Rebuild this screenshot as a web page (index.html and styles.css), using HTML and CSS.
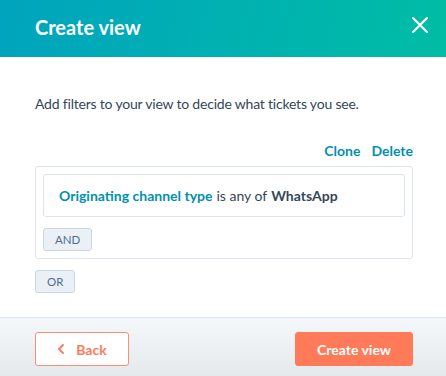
FILE: index.html
```html
<!DOCTYPE html>
<html lang="en">
<head>
    <meta charset="UTF-8">
    <meta name="viewport" content="width=device-width, initial-scale=1.0">
    <title>Create view</title>
    <link rel="stylesheet" href="styles.css">
</head>
<body>
    <div class="modal">
        <div class="modal-header">
            <h1>Create view</h1>
            <button class="close-btn" aria-label="Close">
                <svg width="16" height="16" viewBox="0 0 16 16">
                    <path d="M1 1 L15 15 M15 1 L1 15" stroke="#fff" stroke-width="2.2" stroke-linecap="round"/>
                </svg>
            </button>
        </div>

        <div class="modal-body">
            <p class="intro">Add filters to your view to decide what tickets you see.</p>

            <div class="group-actions">
                <a href="#">Clone</a>
                <a href="#">Delete</a>
            </div>

            <div class="filter-group">
                <div class="filter-card">
                    <span class="prop">Originating channel type</span> is any of <strong>WhatsApp</strong>
                </div>
                <button class="logic-btn">AND</button>
            </div>

            <button class="logic-btn">OR</button>
        </div>

        <div class="modal-footer">
            <button class="btn-secondary">
                <svg width="8" height="10" viewBox="0 0 8 10">
                    <path d="M6 1 L2 5 L6 9" fill="none" stroke="#ff7a59" stroke-width="1.8" stroke-linecap="round" stroke-linejoin="round"/>
                </svg>
                Back
            </button>
            <button class="btn-primary">Create view</button>
        </div>
    </div>
</body>
</html>
```

FILE: styles.css
```css
body {
    margin: 0;
    font-family: Lato, Arial, sans-serif;
    color: #33475b;
    background: #fff;
}
.modal {
    width: 446px;
    height: 376px;
    display: flex;
    flex-direction: column;
}
.modal-header {
    height: 57px;
    background: linear-gradient(100deg, #00a4bd 0%, #00bda5 100%);
    display: flex;
    align-items: center;
    justify-content: space-between;
    padding: 0 18px 0 35px;
}
.modal-header h1 {
    margin: -3px 0 0 0;
    color: #fff;
    font-size: 20px;
    font-weight: 700;
}
.close-btn {
    background: none;
    border: none;
    padding: 0;
    width: 16px;
    height: 16px;
    margin-top: -7px;
    cursor: pointer;
}
.modal-body {
    flex: 1;
    padding: 36px 33px 0 35px;
}
.intro {
    margin: 0 0 26px 0;
    font-size: 14px;
    letter-spacing: -0.2px;
    line-height: 22px;
}
.group-actions {
    display: flex;
    justify-content: flex-end;
    gap: 11px;
    margin-bottom: 5px;
}
.group-actions a {
    color: #0091ae;
    font-weight: 700;
    font-size: 14px;
    text-decoration: none;
    line-height: 20px;
}
.filter-group {
    border: 1px solid #dfe3eb;
    border-radius: 3px;
    padding: 7px 7px 7px 7px;
    margin-bottom: 11px;
}
.filter-card {
    border: 1px solid #dfe3eb;
    border-radius: 3px;
    padding: 0 15px;
    height: 41px;
    display: flex;
    align-items: center;
    gap: 4px;
    font-size: 14px;
    margin-bottom: 11px;
}
.filter-card .prop {
    color: #0091ae;
    font-weight: 700;
}
.filter-card strong {
    color: #33475b;
}
.logic-btn {
    display: block;
    background: #eaf0f6;
    border: 1px solid #cbd6e2;
    border-radius: 3px;
    color: #506e91;
    font-family: inherit;
    font-size: 11.5px;
    height: 23px;
    padding: 0 11px;
}
.modal-footer {
    height: 59px;
    border-top: 1px solid #dfe3eb;
    background: linear-gradient(180deg, #f5f8fa 0%, #e6e9ec 100%);
    display: flex;
    align-items: center;
    justify-content: space-between;
    padding: 4px 33px 0 35px;
    box-sizing: border-box;
}
.btn-secondary,
.btn-primary {
    height: 34px;
    border-radius: 3px;
    font-family: inherit;
    font-size: 14px;
    font-weight: 700;
    cursor: pointer;
}
.btn-secondary {
    width: 94px;
    background: #fff;
    border: 1px solid #ff8f73;
    color: #ff7a59;
    display: flex;
    align-items: center;
    justify-content: center;
    gap: 11px;
}
.btn-primary {
    width: 118px;
    background: #ff7a59;
    border: 1px solid #ff7a59;
    color: #fff;
}
```
